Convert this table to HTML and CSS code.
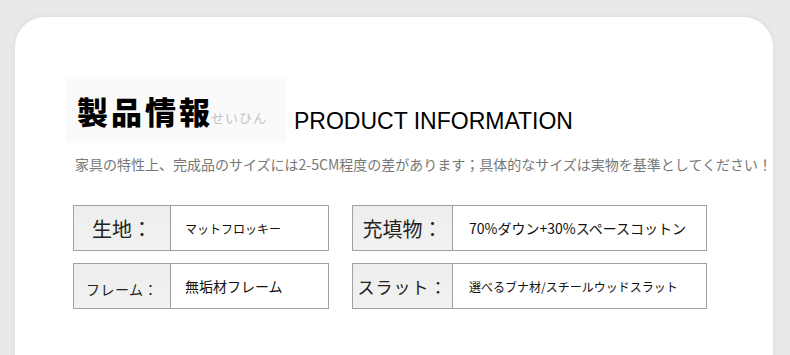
FILE: index.html
```html
<!DOCTYPE html>
<html lang="ja">
<head>
    <meta charset="UTF-8">
    <meta name="viewport" content="width=device-width, initial-scale=1.0">
    <title>製品情報</title>
    <link rel="stylesheet" href="styles.css">
</head>
<body>
    <div class="card">
        <div class="title-row">
            <div class="title-box">
                <h1 class="title-ja">製品情報</h1>
                <span class="title-kana">せいひん</span>
            </div>
            <h2 class="title-en">PRODUCT INFORMATION</h2>
        </div>

        <p class="notice">家具の特性上、完成品のサイズには2-5CM程度の差があります；具体的なサイズは実物を基準としてください！</p>

        <div class="spec-grid">
            <div class="spec">
                <div class="spec-label">生地：</div>
                <div class="spec-value small">マットフロッキー</div>
            </div>
            <div class="spec">
                <div class="spec-label wide">充填物：</div>
                <div class="spec-value">70%ダウン+30%スペースコットン</div>
            </div>
            <div class="spec">
                <div class="spec-label label-sm">フレーム：</div>
                <div class="spec-value">無垢材フレーム</div>
            </div>
            <div class="spec">
                <div class="spec-label wide label-md">スラット：</div>
                <div class="spec-value small">選べるブナ材/スチールウッドスラット</div>
            </div>
        </div>
    </div>
</body>
</html>
```

FILE: styles.css
```css
* {
    margin: 0;
    padding: 0;
    box-sizing: border-box;
}

html, body {
    height: 100%;
    overflow: hidden;
}

body {
    background: #e9e9e9;
    padding: 17px 17px 0 15px;
    font-family: "Noto Sans CJK JP", "Noto Sans", sans-serif;
    color: #111;
}

.card {
    background: #fff;
    border-radius: 30px 30px 0 0;
    min-height: 420px;
    padding: 60px 0 0 50px;
    box-shadow: 0 0 6px rgba(0, 0, 0, 0.07);
}

/* heading */
.title-row {
    display: flex;
    align-items: flex-start;
}

.title-box {
    display: flex;
    align-items: flex-end;
    width: 222px;
    height: 66px;
    padding: 0 0 15px 12px;
    background: #fafafa;
}

.title-ja {
    font-size: 31px;
    font-weight: 900;
    line-height: 34px;
    letter-spacing: 3px;
    color: #000;
}

.title-kana {
    font-size: 13px;
    line-height: 16px;
    color: #c4c4c4;
    letter-spacing: 1px;
    margin: 0 0 2px -2px;
}

.title-en {
    font-family: "Liberation Sans", Arial, sans-serif;
    font-size: 23px;
    font-weight: 400;
    line-height: 26px;
    color: #000;
    margin: 31px 0 0 7px;
}

.notice {
    font-size: 14px;
    line-height: 20px;
    color: #777;
    margin: 11px 0 0 10px;
    white-space: nowrap;
}

/* spec boxes */
.spec-grid {
    display: grid;
    grid-template-columns: 256px 355px;
    column-gap: 23px;
    row-gap: 12px;
    margin: 31px 0 0 8px;
}

.spec {
    display: flex;
    height: 46px;
    border: 1px solid #a0a0a0;
}

.spec-label {
    width: 97px;
    display: flex;
    align-items: center;
    justify-content: center;
    background: linear-gradient(180deg, #eeeeee, #f1f1f1);
    border-right: 1px solid #a0a0a0;
    font-size: 20px;
    color: #222;
    white-space: nowrap;
}

.spec-label.wide {
    width: 100px;
}

.spec-label.label-sm {
    font-size: 14px;
    letter-spacing: 0.5px;
    padding-top: 6px;
}

.spec-label.label-md {
    font-size: 17px;
    letter-spacing: 1px;
}

.spec-value {
    display: flex;
    align-items: center;
    padding-left: 14px;
    font-size: 14px;
    color: #111;
    white-space: nowrap;
}

.spec .wide + .spec-value {
    padding-left: 16px;
}

.spec-value.small {
    font-size: 12px;
}
```
